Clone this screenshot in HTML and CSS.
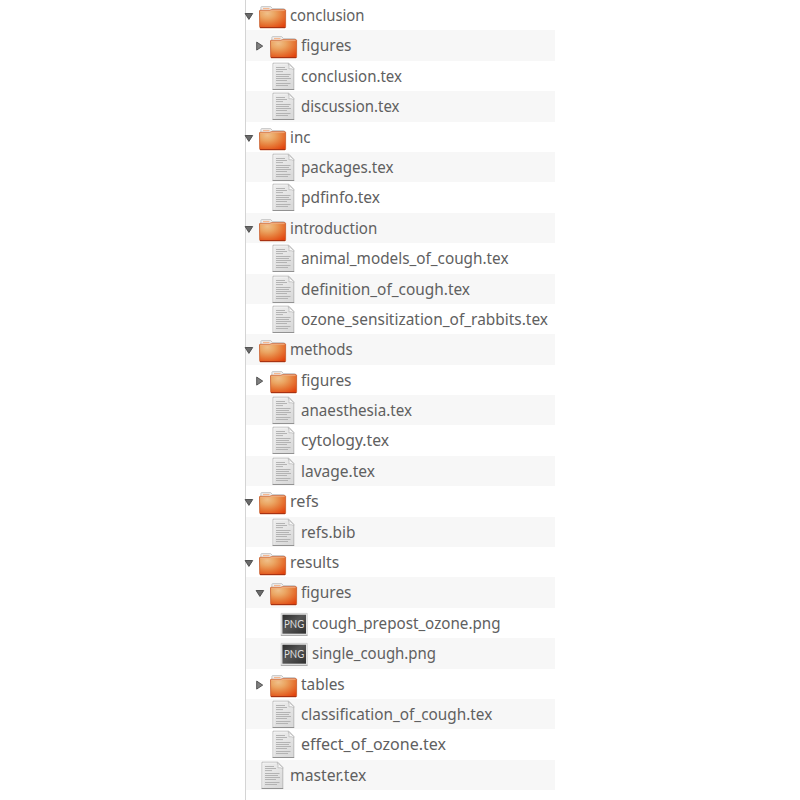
FILE: index.html
```
<!DOCTYPE html>
<html lang="en">
<head>
<meta charset="utf-8">
<title>Files</title>
<link rel="stylesheet" href="styles.css">
</head>
<body>
<svg class="defs" width="0" height="0">
  <defs>
    <linearGradient id="doc-fill" x1="0" y1="0" x2="0.6" y2="1"><stop offset="0" stop-color="#ededed"/><stop offset="0.5" stop-color="#e6e6e6"/><stop offset="1" stop-color="#dadada"/></linearGradient>
    <radialGradient id="folder-fill" cx="0.3" cy="0.2" r="0.95"><stop offset="0" stop-color="#f0c08a"/><stop offset="0.3" stop-color="#eba562"/><stop offset="0.62" stop-color="#e67937"/><stop offset="1" stop-color="#e2430d"/></radialGradient>
    <linearGradient id="png-fill" x1="0" y1="0" x2="1" y2="1"><stop offset="0" stop-color="#2c2c2c"/><stop offset="0.45" stop-color="#555"/><stop offset="1" stop-color="#303030"/></linearGradient>
    <symbol id="folder" viewBox="0 0 28 30">
      <path d="M1.9 13V7.4q0-.8.8-.8h9l1.8 2H24.6q.9 0 .9.9V13z" fill="#eee" stroke="#bdbdbd" stroke-width=".8"/>
      <path d="M4 8.5h6.5" stroke="#f5b78e" stroke-width="1.2"/>
      <path d="M.5 11q0-.7.6-.7h9.8l1.4-.6h13.6q.7 0 .7.7v16.4q0 1-.9 1H1.6q-.9 0-.9-1z" fill="url(#folder-fill)" stroke="#c75a2a" stroke-width=".8"/>
      <path d="M1.4 11.2h9.6l1.5-.6h13.2" fill="none" stroke="#f3b287" stroke-width=".8"/>
      <path d="M1 27.5h25.2" stroke="#a83212" stroke-width="1"/>
    </symbol>
    <symbol id="doc" viewBox="0 0 28 30">
      <path d="M3 2.2h15.8l5 5.2v21.1H3z" fill="url(#doc-fill)" stroke="#b4b4b4" stroke-width=".9"/>
      <path d="M3.8 3.1h14.5M3.8 3v24.8" fill="none" stroke="#f8f8f8" stroke-width=".7"/>
      <path d="M18 2.5q1.7 2.8.9 5.3 2.7-.5 4.9.8l-.2-1.2z" fill="#fafafa" stroke="#b5b5b5" stroke-width=".7"/>
      <path d="M6 6.5h9M6 8.5h11M6 10.6h7M6 13.5h14.5M6 15.5h13M6 17.5h15M6 19.5h11M6 22.5h14.5M6 24.5h12" stroke="#b0b0b0" stroke-width=".95"/>
      <path d="M2.6 28.5h21.6" stroke="#929292" stroke-width="1"/>
    </symbol>
    <symbol id="png" viewBox="0 0 28 30">
      <path d="M1.2 5.4h26v21.8h-26z" fill="#eee" stroke="#c6c6c6" stroke-width=".8"/>
      <path d="M2.4 6.7h23.6v19H2.4z" fill="url(#png-fill)"/>
      <path d="M.8 27.4h26.8" stroke="#999" stroke-width=".8"/>
      <text class="badge" x="4" y="20" textLength="20.2" lengthAdjust="spacingAndGlyphs">PNG</text>
    </symbol>
    <symbol id="open" viewBox="0 0 10 10"><path d="M1.1 2.5h7.6L4.9 8.4z" fill="#6a6a6a" stroke="#4a4a4a" stroke-width=".9"/></symbol>
    <symbol id="closed" viewBox="0 0 10 10"><path d="M1.7 1.1v8L7.7 5.1z" fill="#808080" stroke="#4a4a4a" stroke-width=".9"/></symbol>
  </defs>
</svg>
<ul class="tree" id="tree"></ul>
<script src="tree.js"></script>
</body>
</html>
```
FILE: styles.css
```
body {
  margin: 0;
  background: #fff;
  overflow: hidden;
}

.defs {
  position: absolute;
}

.tree {
  box-sizing: border-box;
  width: 310px;
  height: 800px;
  margin: 0 0 0 245px;
  padding: 0;
  border-left: 1px solid #d4d4d4;
  list-style: none;
  font-family: "Noto Sans", "Open Sans", sans-serif;
  font-size: 16.3px;
  color: #606060;
}

.row {
  display: flex;
  align-items: flex-start;
  height: 30.4px;
}

.row:nth-child(even) {
  background: #f7f7f7;
}

.level-1 { padding-left: 10.6px; }
.level-2 { padding-left: 21.6px; }

.arrow {
  flex: none;
  width: 10px;
  height: 10px;
  margin: 11px 4px 0 -1.5px;
}

.level-0 .arrow {
  margin: 11px 4.3px 0 -1.8px;
}

.icon {
  flex: none;
  width: 28px;
  height: 30px;
  margin-right: 3.6px;
}

.level-1 .icon {
  margin-left: 0.9px;
  margin-right: 3.3px;
}

.label {
  line-height: 31px;
  white-space: nowrap;
  transform-origin: left;
}

.badge {
  font: 11px Lato, sans-serif;
  fill: #ddd;
}
```
FILE: tree.js
```
// level, icon, name, label width, state
const items = [
  [0, 'folder', 'conclusion', 74.5, 'open'],
  [1, 'folder', 'figures', 50.5, 'closed'],
  [1, 'doc', 'conclusion.tex', 101],
  [1, 'doc', 'discussion.tex', 98.5],
  [0, 'folder', 'inc', 20.5, 'open'],
  [1, 'doc', 'packages.tex', 92.5],
  [1, 'doc', 'pdfinfo.tex', 79],
  [0, 'folder', 'introduction', 87.2, 'open'],
  [1, 'doc', 'animal_models_of_cough.tex', 207.5],
  [1, 'doc', 'definition_of_cough.tex', 169],
  [1, 'doc', 'ozone_sensitization_of_rabbits.tex', 247],
  [0, 'folder', 'methods', 62.7, 'open'],
  [1, 'folder', 'figures', 50.5, 'closed'],
  [1, 'doc', 'anaesthesia.tex', 111],
  [1, 'doc', 'cytology.tex', 88],
  [1, 'doc', 'lavage.tex', 74],
  [0, 'folder', 'refs', 28.7, 'open'],
  [1, 'doc', 'refs.bib', 54.5],
  [0, 'folder', 'results', 49.2, 'open'],
  [1, 'folder', 'figures', 50.5, 'open'],
  [2, 'png', 'cough_prepost_ozone.png', 188.5],
  [2, 'png', 'single_cough.png', 124],
  [1, 'folder', 'tables', 43.7, 'closed'],
  [1, 'doc', 'classification_of_cough.tex', 191.3],
  [1, 'doc', 'effect_of_ozone.tex', 145],
  [0, 'doc', 'master.tex', 76.3]
];

const tree = document.getElementById('tree');
tree.innerHTML = items.map(([level, icon, name, width, state]) => `
  <li class="row level-${level}">
    <svg class="arrow">${state ? `<use href="#${state}"/>` : ''}</svg>
    <svg class="icon"><use href="#${icon}"/></svg>
    <span class="label">${name}</span>
  </li>`).join('');

tree.querySelectorAll('.label').forEach((label, i) => {
  const natural = label.getBoundingClientRect().width;
  label.style.transform = `scaleX(${items[i][3] / natural})`;
});
```
